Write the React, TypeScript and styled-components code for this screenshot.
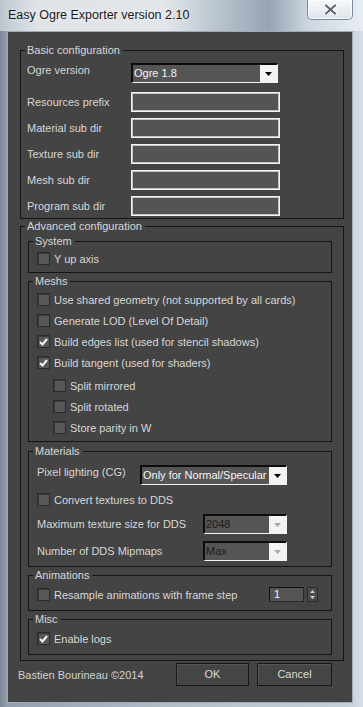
import React from "react";
import styled, { createGlobalStyle } from "styled-components";

const FONT = `"Liberation Sans", Arial, sans-serif`;

const GlobalStyle = createGlobalStyle`
  html, body { margin: 0; padding: 0; background: #b8c3ce; }
  body { font-family: ${FONT}; }
  * { box-sizing: border-box; }
`;

const Window = styled.div`
  width: 363px;
  height: 707px;
  display: flex;
  flex-direction: column;
  overflow: hidden;
  background: linear-gradient(90deg, #7b8794 0px, #939fac 7px, #b3bfcb 50%, #c4cfda 96%, #d6dfe8 100%);
`;

const TitleBar = styled.div`
  height: 31px;
  flex: none;
  display: flex;
  justify-content: space-between;
  align-items: flex-start;
  padding: 0 10px 0 8px;
  background: linear-gradient(90deg, #bcc5ce 0%, #dfe3e8 10%, #e3e7eb 45%, #b9c4cf 60%, #96a4b3 74%, #cdd7e1 85%, #e8edf2 100%);
`;

const Title = styled.div`
  font-family: ${FONT};
  font-size: 12.5px;
  line-height: 30px;
  color: #1b1b1b;
  text-shadow: 0 0 6px rgba(255, 255, 255, 0.9);
`;

const CloseButton = styled.div`
  width: 46px;
  height: 20px;
  display: flex;
  align-items: center;
  justify-content: center;
  border: 1px solid #7d8a98;
  border-top: none;
  border-radius: 0 0 5px 5px;
  background: linear-gradient(#f7f9fb, #dde4eb);
  box-shadow: inset 0 0 0 1px rgba(255, 255, 255, 0.7);
`;

const Client = styled.div`
  flex: 1;
  margin: 0 10px 4px 7px;
  background: #444444;
  border: 1px solid #a2abb5;
  padding: 11px 8px 0 10px;
  display: flex;
  flex-direction: column;
`;

const Body = styled.div`
  padding-left: 2px;
  display: flex;
  flex-direction: column;
`;

const Group = styled.fieldset<{ $mt?: number }>`
  margin: ${(p) => p.$mt ?? 0}px 0 0 0;
  padding: 0;
  min-width: 0;
  border: 1px solid #151515;
`;

const Legend = styled.legend`
  margin-left: 4px;
  padding: 0 3px 0 2px;
  font-family: ${FONT};
  font-size: 11px;
  line-height: 14px;
  color: #d7d7d7;
`;

const GroupBody = styled.div<{ $pad: string; $gap?: number }>`
  padding: ${(p) => p.$pad};
  display: flex;
  flex-direction: column;
  gap: ${(p) => p.$gap ?? 0}px;
`;

const FieldRow = styled.div<{ $mb?: number }>`
  display: flex;
  align-items: center;
  height: 20px;
  margin-bottom: ${(p) => p.$mb ?? 0}px;
`;

const FieldLabel = styled.span<{ $w: number; $top?: boolean }>`
  width: ${(p) => p.$w}px;
  flex: none;
  align-self: ${(p) => (p.$top ? "flex-start" : "center")};
  font-family: ${FONT};
  font-size: 11px;
  line-height: 14px;
  color: #d7d7d7;
  white-space: nowrap;
`;

const TextField = styled.div`
  width: 149px;
  height: 20px;
  background: #545454;
  border: 1px solid #f4f4f4;
  box-shadow: inset 0 0 0 1px #c4c4c4;
`;

const SelectBox = styled.div<{ $w: number }>`
  width: ${(p) => p.$w}px;
  height: 20px;
  display: flex;
  background: #555555;
  border-style: solid;
  border-width: 2px 1px 1px 2px;
  border-color: #0c0c0c #f2f2f2 #f2f2f2 #0c0c0c;
`;

const SelectValue = styled.span<{ $disabled?: boolean }>`
  flex: 1;
  padding-left: 1px;
  font-family: ${FONT};
  font-size: 11px;
  line-height: 17px;
  color: ${(p) => (p.$disabled ? "#1c1c1c" : "#f6f6f6")};
  white-space: nowrap;
  overflow: hidden;
`;

const SelectArrow = styled.span`
  width: 17px;
  flex: none;
  background: #f3f3f3;
  display: flex;
  align-items: center;
  justify-content: center;
`;

const CheckRow = styled.div<{ $indent?: number }>`
  display: flex;
  align-items: center;
  height: 21px;
  gap: 4px;
  padding-left: ${(p) => p.$indent ?? 0}px;
`;

const CheckBox = styled.span`
  width: 13px;
  height: 13px;
  flex: none;
  display: flex;
  align-items: center;
  justify-content: center;
  background: #575757;
  border: 1px solid #2b2b2b;
  box-shadow: inset 1px 1px 0 #3a3a3a;
`;

const CheckLabel = styled.span`
  font-family: ${FONT};
  font-size: 11px;
  line-height: 14px;
  color: #d7d7d7;
  white-space: nowrap;
`;

const SubList = styled.div`
  margin-top: 2px;
  display: flex;
  flex-direction: column;
`;

const SpreadRow = styled.div`
  display: flex;
  align-items: center;
  justify-content: space-between;
`;

const Spinner = styled.div`
  display: flex;
  align-items: center;
  gap: 3px;
`;

const SpinInput = styled.span`
  width: 35px;
  height: 15px;
  background: #555555;
  border-style: solid;
  border-width: 1px;
  border-color: #101010 #2a2a2a #2a2a2a #101010;
  padding-left: 4px;
  font-family: ${FONT};
  font-size: 11px;
  line-height: 13px;
  color: #eef2f8;
`;

const SpinButtons = styled.span`
  width: 11px;
  height: 15px;
  display: flex;
  flex-direction: column;
  align-items: center;
  justify-content: space-around;
  background: #4c4c4c;
  border: 1px solid #2a2a2a;
  padding: 1px 0;
`;

const Footer = styled.div`
  display: flex;
  align-items: center;
  margin-top: 2px;
  padding-right: 12px;
  gap: 8px;
`;

const Credit = styled.span`
  flex: 1;
  font-family: ${FONT};
  font-size: 11px;
  line-height: 14px;
  color: #d2d2d2;
`;

const Button = styled.button<{ $w: number }>`
  width: ${(p) => p.$w}px;
  height: 23px;
  padding: 0 0 2px;
  background: #454545;
  border: 1px solid #181818;
  box-shadow: inset 1px 1px 0 #555555;
  font-family: ${FONT};
  font-size: 11px;
  color: #dadada;
`;

const Arrow = ({ color }: { color: string }) => (
  <svg width="7" height="4" viewBox="0 0 7 4">
    <path d="M0 0 H7 L3.5 4 Z" fill={color} />
  </svg>
);

const Check = ({ checked }: { checked?: boolean }) => (
  <CheckBox>
    {checked && (
      <svg width="9" height="8" viewBox="0 0 9 8">
        <path d="M1 4 L3.5 6.5 L8 1" fill="none" stroke="#f2f2f2" strokeWidth="2" />
      </svg>
    )}
  </CheckBox>
);

const CheckItem = ({ label, checked, indent }: { label: string; checked?: boolean; indent?: number }) => (
  <CheckRow $indent={indent}>
    <Check checked={checked} />
    <CheckLabel>{label}</CheckLabel>
  </CheckRow>
);

const Select = ({ value, w, disabled }: { value: string; w: number; disabled?: boolean }) => (
  <SelectBox $w={w}>
    <SelectValue $disabled={disabled}>{value}</SelectValue>
    <SelectArrow>
      <Arrow color={disabled ? "#a8a8a8" : "#000"} />
    </SelectArrow>
  </SelectBox>
);

export default function App() {
  const dirs = ["Resources prefix", "Material sub dir", "Texture sub dir", "Mesh sub dir", "Program sub dir"];
  return (
    <>
      <GlobalStyle />
      <Window>
        <TitleBar>
          <Title>Easy Ogre Exporter version 2.10</Title>
          <CloseButton>
            <svg width="13" height="11" viewBox="0 0 13 11">
              <path d="M2 1.5 L11 9.5 M11 1.5 L2 9.5" stroke="#ffffff" strokeWidth="4" strokeLinecap="round" />
              <path d="M2 1.5 L11 9.5 M11 1.5 L2 9.5" stroke="#5c6672" strokeWidth="2.2" strokeLinecap="round" />
            </svg>
          </CloseButton>
        </TitleBar>
        <Client>
          <Body>
            <Group>
              <Legend>Basic configuration</Legend>
              <GroupBody $pad="6px 0 2px 6px" $gap={6}>
                <FieldRow $mb={3}>
                  <FieldLabel $w={104} $top>Ogre version</FieldLabel>
                  <Select value="Ogre 1.8" w={147} />
                </FieldRow>
                {dirs.map((d) => (
                  <FieldRow key={d}>
                    <FieldLabel $w={104}>{d}</FieldLabel>
                    <TextField />
                  </FieldRow>
                ))}
              </GroupBody>
            </Group>
            <Group>
              <Legend>Advanced configuration</Legend>
              <GroupBody $pad="1px 11px 5px 7px" $gap={1}>
                <Group>
                  <Legend>System</Legend>
                  <GroupBody $pad="0 0 3px 8px">
                    <CheckItem label="Y up axis" />
                  </GroupBody>
                </Group>
                <Group>
                  <Legend>Meshs</Legend>
                  <GroupBody $pad="1px 0 3px 8px">
                    <CheckItem label="Use shared geometry (not supported by all cards)" />
                    <CheckItem label="Generate LOD (Level Of Detail)" />
                    <CheckItem label="Build edges list (used for stencil shadows)" checked />
                    <CheckItem label="Build tangent (used for shaders)" checked />
                    <SubList>
                      <CheckItem label="Split mirrored" indent={16} />
                      <CheckItem label="Split rotated" indent={16} />
                      <CheckItem label="Store parity in W" indent={16} />
                    </SubList>
                  </GroupBody>
                </Group>
                <Group $mt={1}>
                  <Legend>Materials</Legend>
                  <GroupBody $pad="7px 0 5px 8px">
                    <FieldRow $mb={4}>
                      <FieldLabel $w={103} $top>Pixel lighting (CG)</FieldLabel>
                      <Select value="Only for Normal/Specular" w={147} />
                    </FieldRow>
                    <CheckItem label="Convert textures to DDS" />
                    <FieldRow $mb={7} style={{ marginTop: 4 }}>
                      <FieldLabel $w={166}>Maximum texture size for DDS</FieldLabel>
                      <Select value="2048" w={84} disabled />
                    </FieldRow>
                    <FieldRow>
                      <FieldLabel $w={166}>Number of DDS Mipmaps</FieldLabel>
                      <Select value="Max" w={84} disabled />
                    </FieldRow>
                  </GroupBody>
                </Group>
                <Group>
                  <Legend>Animations</Legend>
                  <GroupBody $pad="2px 13px 5px 8px">
                    <SpreadRow>
                      <CheckItem label="Resample animations with frame step" />
                      <Spinner>
                        <SpinInput>1</SpinInput>
                        <SpinButtons>
                          <svg width="5" height="3" viewBox="0 0 5 3">
                            <path d="M0 3 H5 L2.5 0 Z" fill="#cfcfcf" />
                          </svg>
                          <svg width="5" height="3" viewBox="0 0 5 3">
                            <path d="M0 0 H5 L2.5 3 Z" fill="#cfcfcf" />
                          </svg>
                        </SpinButtons>
                      </Spinner>
                    </SpreadRow>
                  </GroupBody>
                </Group>
                <Group>
                  <Legend>Misc</Legend>
                  <GroupBody $pad="2px 0 5px 8px">
                    <CheckItem label="Enable logs" checked />
                  </GroupBody>
                </Group>
              </GroupBody>
            </Group>
          </Body>
          <Footer>
            <Credit>Bastien Bourineau ©2014</Credit>
            <Button $w={73}>OK</Button>
            <Button $w={75}>Cancel</Button>
          </Footer>
        </Client>
      </Window>
    </>
  );
}
